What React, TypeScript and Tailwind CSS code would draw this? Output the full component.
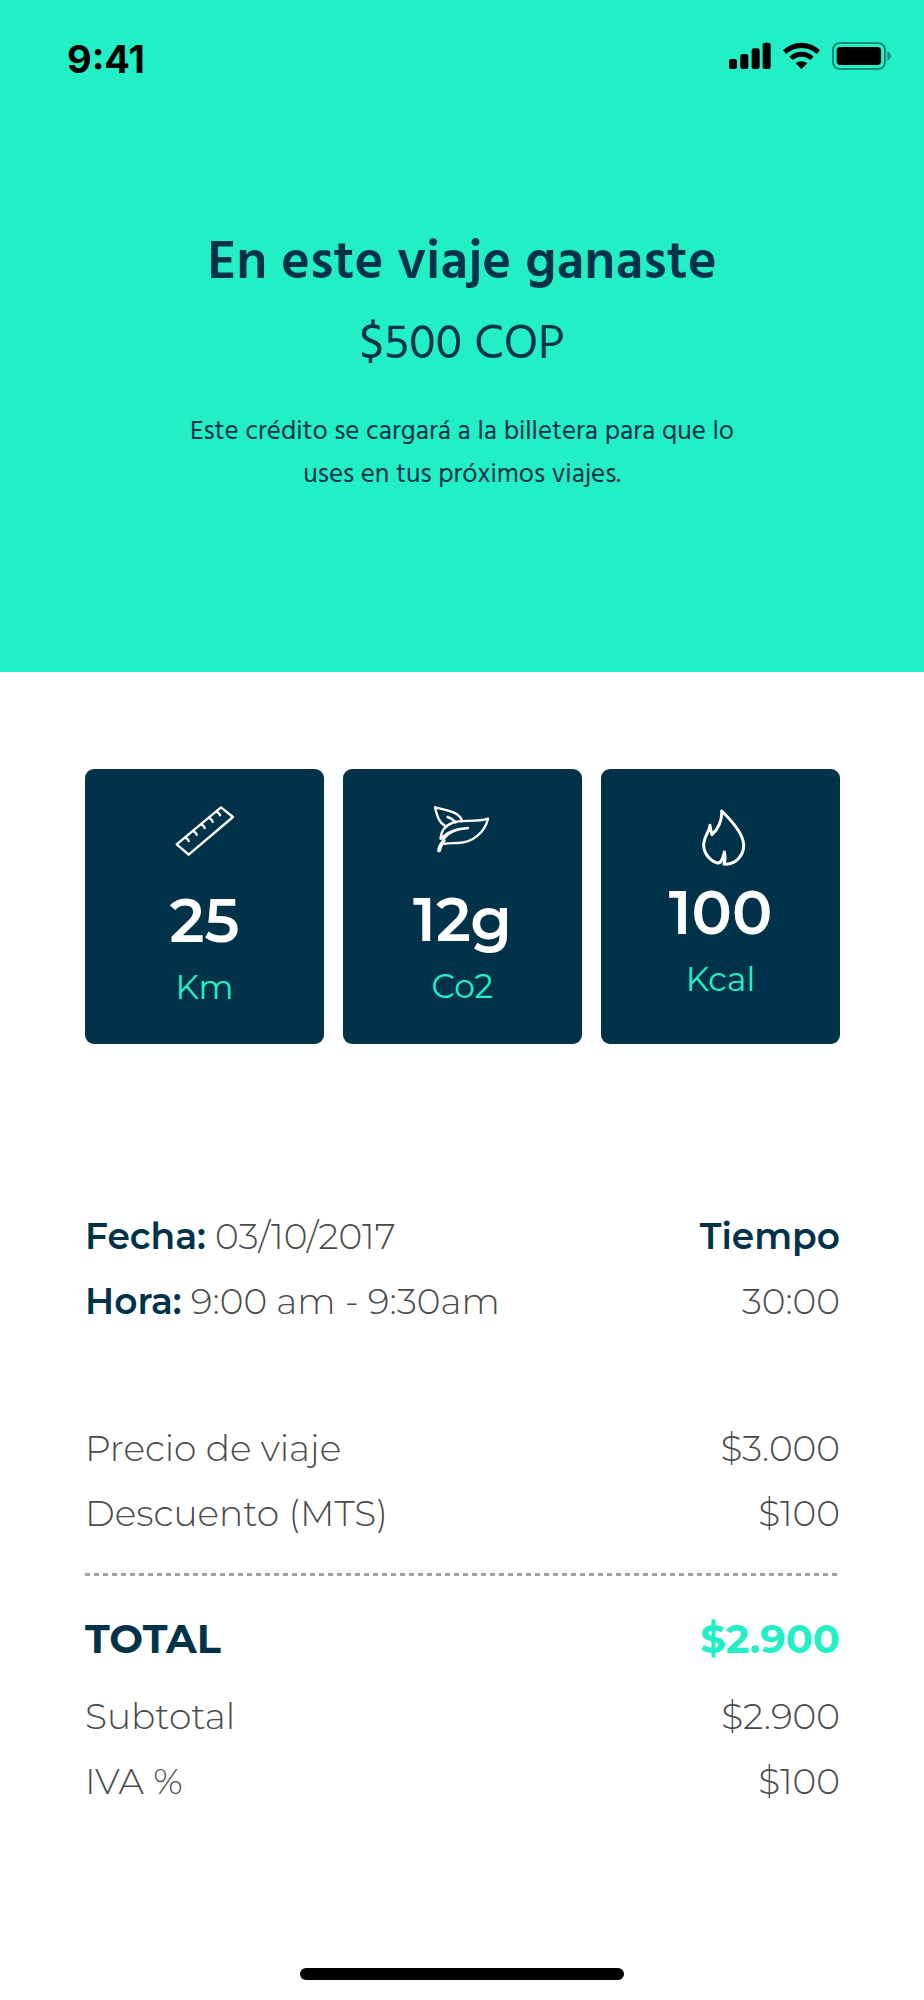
import { ReactNode } from 'react';

interface Stat {
  value: string;
  unit: string;
  icon: ReactNode;
  className: string;
}

function RulerIcon() {
  return (
    <svg width="60" height="52" viewBox="0 0 180 156" fill="none" stroke="currentColor" strokeWidth="7" strokeLinejoin="round" aria-hidden="true">
      <path d="M138 7L174 36L41 149L5 118Z" />
      <path d="M28 98C33 97 40 103 42 111M52 78C57 77 64 84 66 92M76 58C81 57 88 64 90 72M100 39C105 38 112 45 114 53M122 20C127 19 134 26 136 34" />
    </svg>
  );
}

function LeafIcon() {
  return (
    <svg width="60" height="52" viewBox="0 0 180 156" fill="none" stroke="currentColor" strokeWidth="7" strokeLinecap="round" strokeLinejoin="round" aria-hidden="true">
      <path d="M6 10C12 36 18 56 38 67" />
      <path d="M6 10C40 20 76 22 87 49" />
      <path d="M44 39C53 42 61 48 68 55" strokeWidth="8" />
      <path d="M23 104C24 82 38 64 60 56C86 46 130 56 165 44C156 84 120 116 76 117C60 118 46 116 34 120" />
      <path d="M23 104C42 88 70 74 105 72" strokeWidth="7" />
      <path d="M24 102C38 84 60 77 80 73C60 84 44 92 32 110Z" fill="currentColor" strokeWidth="2" />
      <path d="M18 139C20 128 24 120 32 111" strokeWidth="12" />
    </svg>
  );
}

function FlameIcon() {
  return (
    <svg width="60" height="58" viewBox="0 0 180 174" fill="none" stroke="currentColor" strokeWidth="9" strokeLinejoin="round" aria-hidden="true">
      <path d="M92 9C124 40 158 82 158 112C158 146 130 172 99 168C104 156 102 142 100 132C97 144 94 166 80 165C58 160 38 136 38 112C38 84 56 72 57 52C58 62 60 70 63 80C80 66 94 38 92 9Z" />
    </svg>
  );
}

const stats: Stat[] = [
  { value: '25', unit: 'Km', icon: <RulerIcon />, className: 'pt-9 gap-[34px]' },
  { value: '12g', unit: 'Co2', icon: <LeafIcon />, className: 'pt-[35px] gap-[34px]' },
  { value: '100', unit: 'Kcal', icon: <FlameIcon />, className: 'pt-[39px] gap-[17px]' },
];

const charges = [
  { label: 'Precio de viaje', amount: '$3.000' },
  { label: 'Descuento (MTS)', amount: '$100' },
];

const taxes = [
  { label: 'Subtotal', amount: '$2.900' },
  { label: 'IVA %', amount: '$100' },
];

function StatusBar() {
  return (
    <div className="flex items-start justify-between pl-[67px] pr-8 pt-[35px] text-black">
      <span className="font-[Inter,sans-serif] text-[38px] leading-[48px] font-bold">9:41</span>
      <div className="flex gap-3 pt-[7px]">
        {/* Signal */}
        <svg width="42" height="27" viewBox="0 0 126 81" fill="currentColor" aria-hidden="true">
          <rect x="0" y="51" width="24" height="30" rx="7" />
          <rect x="34" y="36" width="24" height="45" rx="7" />
          <rect x="68" y="19" width="24" height="62" rx="7" />
          <rect x="101" y="2" width="24" height="79" rx="7" />
        </svg>
        {/* Wifi */}
        <svg width="37" height="27" viewBox="0 0 111 81" fill="currentColor" aria-hidden="true">
          <path d="M0 25A80 80 0 0 1 111 25L101 36A66 66 0 0 0 10 36Z" />
          <path d="M19 44A53 53 0 0 1 92 44L82 54A40 40 0 0 0 29 54Z" />
          <path d="M38 64A27 27 0 0 1 73 64L55 81Z" />
        </svg>
        {/* Battery */}
        <svg width="60" height="28" viewBox="0 0 180 84" fill="currentColor" aria-hidden="true">
          <rect x="3" y="3" width="156" height="78" rx="20" fill="none" stroke="currentColor" strokeWidth="6" opacity="0.4" />
          <rect x="14" y="15" width="133" height="54" rx="11" />
          <path d="M166 28C180 33 180 51 166 56Z" opacity="0.4" />
        </svg>
      </div>
    </div>
  );
}

function Row({ label, amount }: { label: ReactNode; amount: string }) {
  return (
    <div className="flex justify-between gap-4">
      <dt>{label}</dt>
      <dd>{amount}</dd>
    </div>
  );
}

export default function App() {
  return (
    <div className="bg-white font-[Montserrat,Inter,sans-serif] text-[#4a4a4a]">
      <header className="bg-[#23efc7] pb-[175px]">
        <StatusBar />

        <div className="mx-auto mt-[149px] max-w-[580px] text-center font-[Hind,'Noto_Sans',sans-serif] text-[#003349]">
          <h1 className="text-[55px] leading-[64px] font-semibold">En este viaje ganaste</h1>
          <p className="mt-[22px] text-[49px] leading-[56px]">$500 COP</p>
          <p className="mt-[37px] text-[27px] leading-[43px]">
            Este crédito se cargará a la billetera para que lo uses en tus próximos viajes.
          </p>
        </div>
      </header>

      <main className="pl-[85px] pr-[84px] pt-[97px]">
        {/* Trip stats */}
        <section className="grid grid-cols-3 gap-[19px]">
          {stats.map((stat) => (
            <div key={stat.unit} className={`flex h-[275px] flex-col items-center rounded-[9px] bg-[#003349] text-white ${stat.className}`}>
              {stat.icon}
              <div className="text-center">
                <div className="text-[60px] leading-[60px] font-semibold">{stat.value}</div>
                <div className="mt-4 text-[33px] leading-10 text-[#23efc7]">{stat.unit}</div>
              </div>
            </div>
          ))}
        </section>

        {/* Date and duration */}
        <section className="mt-40 flex justify-between text-4xl leading-[65px] font-[350]">
          <div>
            <p>
              <strong className="font-semibold text-[#003349]">Fecha:</strong> 03/10/2017
            </p>
            <p>
              <strong className="font-semibold text-[#003349]">Hora:</strong> 9:00 am - 9:30am
            </p>
          </div>
          <div className="text-right">
            <p className="font-semibold text-[#003349]">Tiempo</p>
            <p>30:00</p>
          </div>
        </section>

        {/* Price breakdown */}
        <dl className="mt-[82px] text-4xl leading-[65px] font-[350]">
          {charges.map((charge) => (
            <Row key={charge.label} {...charge} />
          ))}
        </dl>

        <hr className="mt-[27px] mr-[3px] h-[3px] border-0 bg-[repeating-linear-gradient(to_right,#a3a3a3_0_5px,transparent_5px_9px)]" />

        <dl className="mt-[30px] text-4xl leading-[65px] font-[350]">
          <div className="mb-[13px] flex justify-between gap-4 text-[40px] font-bold">
            <dt className="text-[#003349]">TOTAL</dt>
            <dd className="text-[#23efc7]">$2.900</dd>
          </div>
          {taxes.map((tax) => (
            <Row key={tax.label} {...tax} />
          ))}
        </dl>
      </main>

      {/* Home indicator */}
      <div className="flex justify-center pt-[154px] pb-5">
        <div className="h-3 w-[324px] rounded-full bg-black" />
      </div>
    </div>
  );
}
